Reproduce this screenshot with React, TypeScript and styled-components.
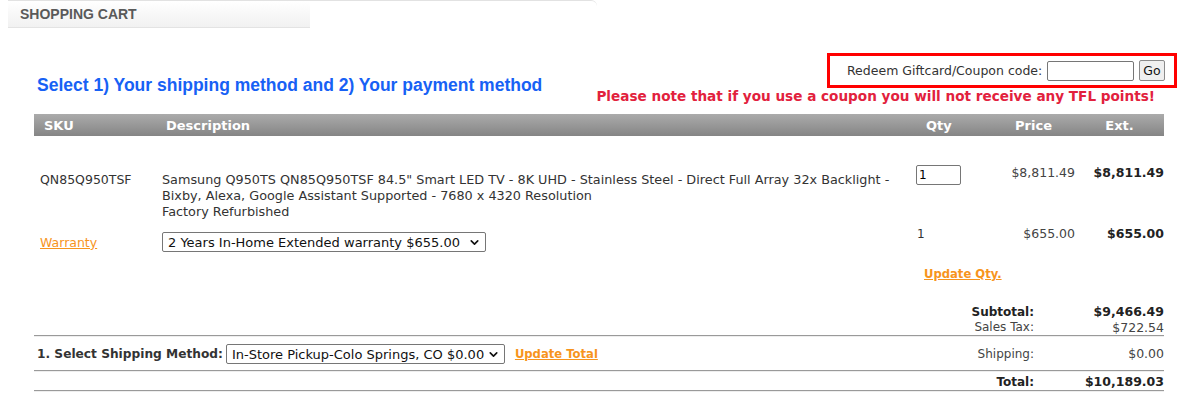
import React, { useState } from "react";
import styled, { createGlobalStyle } from "styled-components";
import { ChevronDown } from "lucide-react";

const GlobalStyle = createGlobalStyle`
  body {
    margin: 0;
    background: #ffffff;
    font-family: "DejaVu Sans", Verdana, sans-serif;
    color: #333333;
  }
`;

const Page = styled.div`
  width: 1182px;
  height: 401px;
  overflow: hidden;
`;

const TabStrip = styled.div`
  margin-left: 8px;
  width: 589px;
  border-top: 1px solid #e2e2e2;
  border-top-right-radius: 6px;
`;

const Tab = styled.div`
  width: 302px;
  height: 27px;
  display: flex;
  align-items: center;
  padding-left: 12px;
  box-sizing: border-box;
  background: linear-gradient(#ffffff, #f1f1f1);
  border-bottom: 1px solid #e3e3e3;
  font-family: "Liberation Sans", Arial, sans-serif;
  font-weight: bold;
  font-size: 14px;
  color: #5a5a5a;
`;

const TopArea = styled.div`
  display: flex;
  justify-content: space-between;
  margin-top: 25px;
  height: 61px;
`;

const Title = styled.h2`
  margin: 22px 0 0 37px;
  font-family: "Liberation Sans", Arial, sans-serif;
  font-size: 17.5px;
  font-weight: bold;
  color: #1761f5;
`;

const CouponColumn = styled.div`
  display: flex;
  flex-direction: column;
  align-items: flex-end;
  padding-right: 5px;
`;

const CouponBox = styled.div`
  display: flex;
  align-items: center;
  gap: 5px;
  width: 350px;
  height: 35px;
  box-sizing: border-box;
  border: 3px solid #ff0000;
  padding-left: 17px;
  font-size: 12.5px;
  color: #333;
`;

const CouponInput = styled.input`
  width: 87px;
  height: 20px;
  box-sizing: border-box;
  border: 1px solid #767676;
  border-radius: 2px;
  margin: 0;
`;

const GoButton = styled.button`
  height: 21px;
  padding: 0 3px;
  font-family: "DejaVu Sans", Verdana, sans-serif;
  font-size: 12.5px;
  color: #111;
  background: #efefef;
  border: 1px solid #8a8a8a;
  border-radius: 2px;
`;

const Note = styled.div`
  padding-right: 22px;
  font-size: 13.6px;
  font-weight: bold;
  color: #e2213d;
  white-space: nowrap;
`;

const Cart = styled.div`
  margin: 0 18px 0 34px;
  width: 1130px;
`;

const Grid = styled.div`
  display: grid;
  grid-template-columns: 128px 750px 80px 83px 89px;
  align-items: start;
`;

const HeaderBar = styled(Grid)`
  height: 22px;
  align-items: center;
  background: linear-gradient(#ababab, #858585);
  color: #ffffff;
  font-weight: bold;
  font-size: 13px;
`;

const HeadCell = styled.div<{ $align?: string; $pad?: number }>`
  text-align: ${(p) => p.$align || "left"};
  padding-left: ${(p) => p.$pad || 0}px;
`;

const Row = styled(Grid)<{ $top: number }>`
  margin-top: ${(p) => p.$top}px;
  font-size: 12px;
  line-height: 16px;
`;

const Cell = styled.div<{ $top?: number; $align?: string; $bold?: boolean }>`
  padding-top: ${(p) => p.$top || 0}px;
  text-align: ${(p) => p.$align || "left"};
  font-weight: ${(p) => (p.$bold ? "bold" : "normal")};
  color: ${(p) => (p.$bold ? "#222" : "#444")};
`;

const SkuCell = styled(Cell)`
  padding-left: 6px;
  font-size: 12.5px;
  color: #333;
`;

const DescCell = styled(Cell)`
  padding-right: 12px;
  font-size: 12.8px;
  color: #333;
`;

const QtyText = styled(Cell)`
  padding-left: 5px;
  color: #333;
`;

const Price = styled(Cell)`
  font-size: 12.5px;
`;

const OrangeLink = styled.a<{ $bold?: boolean }>`
  color: #f7941d;
  text-decoration: underline;
  font-weight: ${(p) => (p.$bold ? "bold" : "normal")};
  cursor: pointer;
`;

const BoldLink = styled(OrangeLink)`
  font-size: 11.6px;
`;

const QtyInput = styled.input`
  width: 45px;
  height: 20px;
  box-sizing: border-box;
  margin: 0 0 0 4px;
  padding: 0 2px;
  border: 1px solid #767676;
  border-radius: 2px;
  font-family: "DejaVu Sans", Verdana, sans-serif;
  font-size: 12px;
`;

const SelectWrap = styled.span<{ $width: number }>`
  position: relative;
  display: inline-block;
  width: ${(p) => p.$width}px;
  height: 20px;
  vertical-align: middle;
`;

const Select = styled.select`
  appearance: none;
  width: 100%;
  height: 100%;
  box-sizing: border-box;
  margin: 0;
  padding: 0 20px 0 5px;
  border: 1px solid #767676;
  border-radius: 2px;
  background: #ffffff;
  font-family: "DejaVu Sans", Verdana, sans-serif;
  font-size: 13px;
  font-weight: normal;
  color: #111;
`;

const Chevron = styled(ChevronDown)`
  position: absolute;
  right: 5px;
  top: 4px;
  pointer-events: none;
  color: #111;
`;

const UpdateRow = styled.div`
  margin-top: 13px;
  padding-left: 890px;
  line-height: 16px;
`;

const Totals = styled.div`
  display: grid;
  grid-template-columns: 1fr 122px 130px;
  font-size: 12px;
`;

const TotalRow = styled(Totals)<{ $top?: number; $lh?: number }>`
  margin-top: ${(p) => p.$top || 0}px;
  line-height: ${(p) => p.$lh || 16}px;
  align-items: center;
`;

const Label = styled.div<{ $bold?: boolean }>`
  grid-column: 2;
  text-align: right;
  font-weight: ${(p) => (p.$bold ? "bold" : "normal")};
  color: ${(p) => (p.$bold ? "#222" : "#444")};
`;

const Value = styled.div<{ $bold?: boolean }>`
  text-align: right;
  font-size: 12.5px;
  font-weight: ${(p) => (p.$bold ? "bold" : "normal")};
  color: ${(p) => (p.$bold ? "#222" : "#444")};
`;

const Rule = styled.div<{ $top?: number }>`
  margin-top: ${(p) => p.$top || 0}px;
  height: 1px;
  background: #9a9a9a;
  border-bottom: 1px solid #eeeeee;
`;

const ShipLeft = styled.div`
  grid-column: 1;
  display: flex;
  align-items: center;
  gap: 3px;
  padding-left: 3px;
  font-size: 12.2px;
  font-weight: bold;
  color: #333;
  white-space: nowrap;
`;

const ShipLink = styled(BoldLink)`
  margin-left: 7px;
`;

export default function App() {
  const [coupon, setCoupon] = useState("");
  const [qty, setQty] = useState("1");

  return (
    <Page>
      <GlobalStyle />
      <TabStrip>
        <Tab>SHOPPING CART</Tab>
      </TabStrip>

      <TopArea>
        <Title>Select 1) Your shipping method and 2) Your payment method</Title>
        <CouponColumn>
          <CouponBox>
            <span>Redeem Giftcard/Coupon code:</span>
            <CouponInput value={coupon} onChange={(e) => setCoupon(e.target.value)} />
            <GoButton>Go</GoButton>
          </CouponBox>
          <Note>Please note that if you use a coupon you will not receive any TFL points!</Note>
        </CouponColumn>
      </TopArea>

      <Cart>
        <HeaderBar>
          <HeadCell $pad={10}>SKU</HeadCell>
          <HeadCell $pad={4}>Description</HeadCell>
          <HeadCell $pad={14}>Qty</HeadCell>
          <HeadCell $align="center">Price</HeadCell>
          <HeadCell $align="center">Ext.</HeadCell>
        </HeaderBar>

        <Row $top={29}>
          <SkuCell $top={7}>QN85Q950TSF</SkuCell>
          <DescCell $top={7}>
            Samsung Q950TS QN85Q950TSF 84.5" Smart LED TV - 8K UHD - Stainless Steel - Direct Full Array 32x
            Backlight - Bixby, Alexa, Google Assistant Supported - 7680 x 4320 Resolution
            <br />
            Factory Refurbished
          </DescCell>
          <Cell>
            <QtyInput value={qty} onChange={(e) => setQty(e.target.value)} />
          </Cell>
          <Price $align="right">$8,811.49</Price>
          <Price $align="right" $bold>
            $8,811.49
          </Price>
        </Row>

        <Row $top={6}>
          <SkuCell $top={9}>
            <OrangeLink>Warranty</OrangeLink>
          </SkuCell>
          <Cell $top={6}>
            <SelectWrap $width={324}>
              <Select defaultValue="2y">
                <option value="2y">2 Years In-Home Extended warranty $655.00</option>
              </Select>
              <Chevron size={13} strokeWidth={3} />
            </SelectWrap>
          </Cell>
          <QtyText>1</QtyText>
          <Price $align="right">$655.00</Price>
          <Price $align="right" $bold>
            $655.00
          </Price>
        </Row>

        <UpdateRow>
          <BoldLink $bold>Update Qty.</BoldLink>
        </UpdateRow>

        <TotalRow $top={22}>
          <Label $bold>Subtotal:</Label>
          <Value $bold>$9,466.49</Value>
        </TotalRow>
        <TotalRow $lh={15}>
          <Label>Sales Tax:</Label>
          <Value>$722.54</Value>
        </TotalRow>
        <Rule />

        <TotalRow $top={7} $lh={20}>
          <ShipLeft>
            1. Select Shipping Method:
            <SelectWrap $width={279}>
              <Select defaultValue="pickup">
                <option value="pickup">In-Store Pickup-Colo Springs, CO $0.00</option>
              </Select>
              <Chevron size={13} strokeWidth={3} />
            </SelectWrap>
            <ShipLink $bold>Update Total</ShipLink>
          </ShipLeft>
          <Label>Shipping:</Label>
          <Value>$0.00</Value>
        </TotalRow>
        <Rule $top={6} />

        <TotalRow $top={2} $lh={16}>
          <Label $bold>Total:</Label>
          <Value $bold>$10,189.03</Value>
        </TotalRow>
        <Rule />
      </Cart>
    </Page>
  );
}
